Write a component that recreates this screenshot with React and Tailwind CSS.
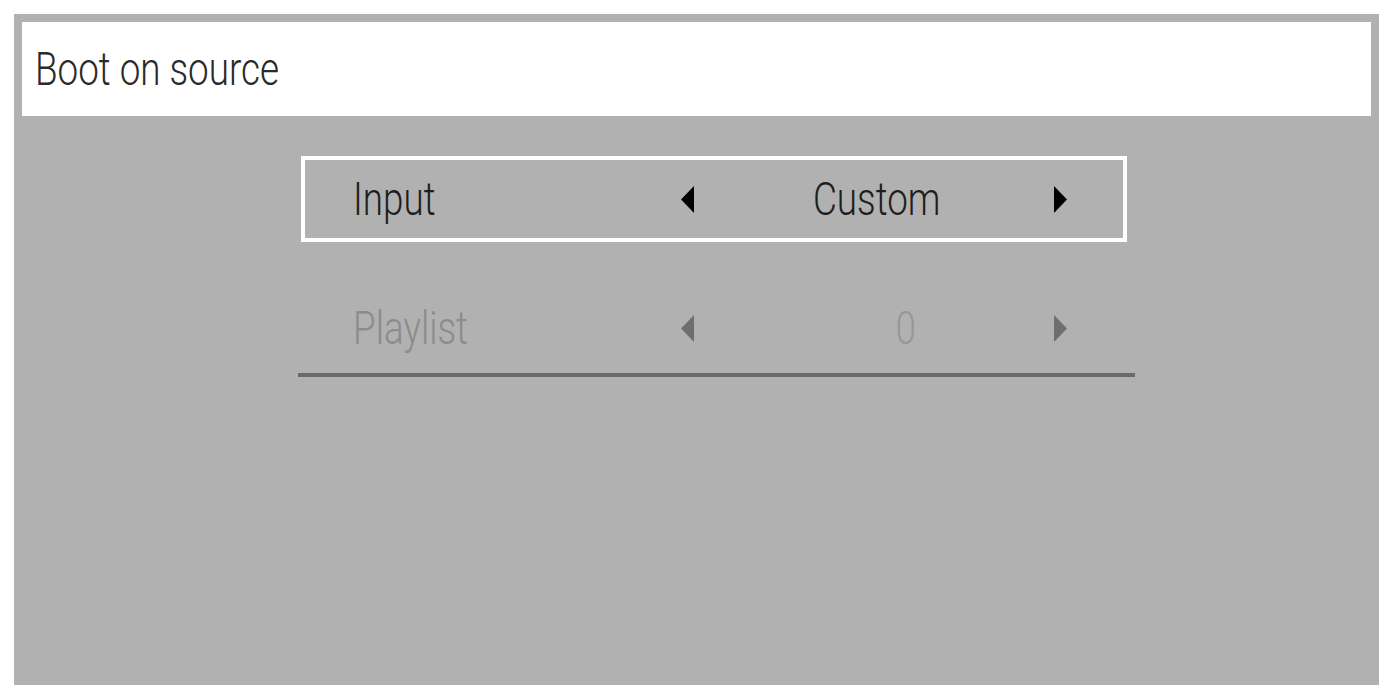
const font = { fontFamily: 'Roboto, "Liberation Sans", sans-serif' };

function Arrow({ dir, className }) {
  return (
    <svg width="13" height="27" viewBox="0 0 13 27" className={className}>
      {dir === "left" ? (
        <polygon points="13,0 13,27 0,13.5" fill="currentColor" />
      ) : (
        <polygon points="0,0 0,27 13,13.5" fill="currentColor" />
      )}
    </svg>
  );
}

function OptionRow({ label, value, selected, disabled, valueClass = "" }) {
  return (
    <div
      className={
        "ml-[3px] flex h-[86px] w-[826px] items-center border-4 " +
        (selected ? "border-white" : "border-transparent")
      }
    >
      <span
        className={
          "w-[376px] pl-[48px] text-[46px] font-light leading-none " +
          (disabled ? "text-[#8c8c8c]" : "text-[#1e1e1e]")
        }
      >
        <span className="inline-block origin-left scale-x-[0.8]">{label}</span>
      </span>
      <Arrow dir="left" className={disabled ? "text-[#6e6e6e]" : "text-black"} />
      <span
        className={
          "w-[360px] text-center text-[46px] font-light leading-none " +
          (disabled ? "text-[#979797] " : "text-[#1e1e1e] ") +
          valueClass
        }
      >
        <span className="inline-block origin-center scale-x-[0.8]">{value}</span>
      </span>
      <Arrow dir="right" className={disabled ? "text-[#6e6e6e]" : "text-black"} />
    </div>
  );
}

export default function App() {
  return (
    <div className="min-h-screen bg-white pl-[14px] pt-[14px]" style={font}>
      <div className="flex h-[671px] w-[1365px] flex-col bg-[#b1b1b1] p-[8px]">
        <div className="flex h-[94px] items-center bg-white pl-[13px]">
          <span className="inline-block origin-left scale-x-[0.8] text-[46px] font-light leading-none text-[#2a2a2a]">
            Boot on source
          </span>
        </div>

        <div className="ml-[276px] mt-[40px] flex w-[837px] flex-col">
          <OptionRow label="Input" value="Custom" selected valueClass="pl-[5px]" />
          <div className="h-[43px]" />
          <OptionRow label="Playlist" value="0" disabled valueClass="pl-[64px]" />
          <div className="mt-[2px] h-[4px] w-[837px] bg-[#6a6a6a]" />
        </div>
      </div>
    </div>
  );
}
